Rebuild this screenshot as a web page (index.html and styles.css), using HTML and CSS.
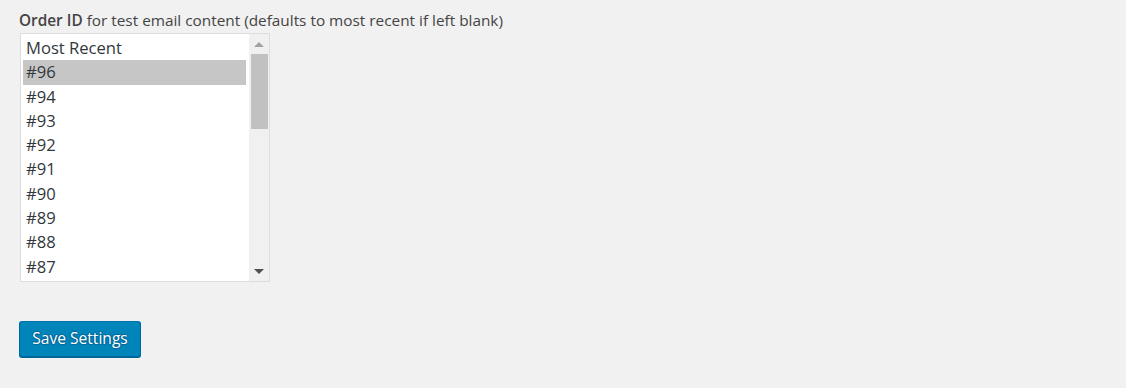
FILE: index.html
```html
<!DOCTYPE html>
<html>
<head>
<meta charset="utf-8">
<link rel="stylesheet" href="styles.css">
</head>
<body>
<div class="wrap">
  <p class="label"><strong>Order ID</strong> for test email content (defaults to most recent if left blank)</p>
  <div class="listbox">
    <ul class="options">
      <li>Most Recent</li>
      <li class="selected">#96</li>
      <li>#94</li>
      <li>#93</li>
      <li>#92</li>
      <li>#91</li>
      <li>#90</li>
      <li>#89</li>
      <li>#88</li>
      <li>#87</li>
    </ul>
    <div class="scrollbar">
      <span class="arrow up"></span>
      <div class="track"><div class="thumb"></div></div>
      <span class="arrow down"></span>
    </div>
  </div>
  <button class="button-primary">Save Settings</button>
</div>
</body>
</html>
```
FILE: styles.css
```css
html, body {
  margin: 0;
  padding: 0;
  background: #f1f1f1;
}
body {
  font-family: "Open Sans", "Noto Sans", sans-serif;
  color: #444;
  width: 1126px;
  height: 388px;
  overflow: hidden;
}
.wrap {
  padding: 9px 19px;
  display: flex;
  flex-direction: column;
  align-items: flex-start;
}
.label {
  margin: 0 0 1px 0;
  font-size: 15.35px;
  line-height: 23px;
  color: #444;
}
.label strong {
  font-weight: 600;
}
.listbox {
  margin-left: 1px;
  width: 250px;
  height: 249px;
  border: 1px solid #ddd;
  background: #fff;
  display: flex;
  box-sizing: border-box;
}
.options {
  list-style: none;
  margin: 0;
  padding: 2px 0 0 2px;
  flex: 1;
  font-size: 16.6px;
  color: #32373c;
}
.options li {
  height: 24.3px;
  line-height: 24.3px;
  padding-left: 3px;
}
.options li.selected {
  background: #c6c6c6;
}
.scrollbar {
  width: 20px;
  margin-left: 3px;
  background: #f0f0f0;
  display: flex;
  flex-direction: column;
  align-items: center;
}
.arrow {
  width: 0;
  height: 0;
  border-left: 5px solid transparent;
  border-right: 5px solid transparent;
  flex: none;
}
.arrow.up {
  margin-top: 8px;
  border-bottom: 5px solid #a3a3a3;
}
.arrow.down {
  margin-bottom: 7px;
  border-top: 5px solid #505050;
}
.track {
  flex: 1;
  width: 100%;
  padding: 7px 1px 0 2px;
  box-sizing: border-box;
}
.thumb {
  height: 75px;
  background: #c1c1c1;
}
.button-primary {
  margin-top: 39px;
  width: 122px;
  height: 36px;
  background: #0085ba;
  border: 1px solid #0073aa;
  border-color: #0073aa #006799 #006799;
  border-radius: 3px;
  box-shadow: 0 1px 0 #006799;
  color: #fff;
  font-family: "Open Sans", "Noto Sans", sans-serif;
  font-size: 15.6px;
  padding: 0 8px 2px;
  text-shadow: 0 -1px 1px #006799, 1px 0 1px #006799, 0 1px 1px #006799, -1px 0 1px #006799;
  cursor: pointer;
}
```
